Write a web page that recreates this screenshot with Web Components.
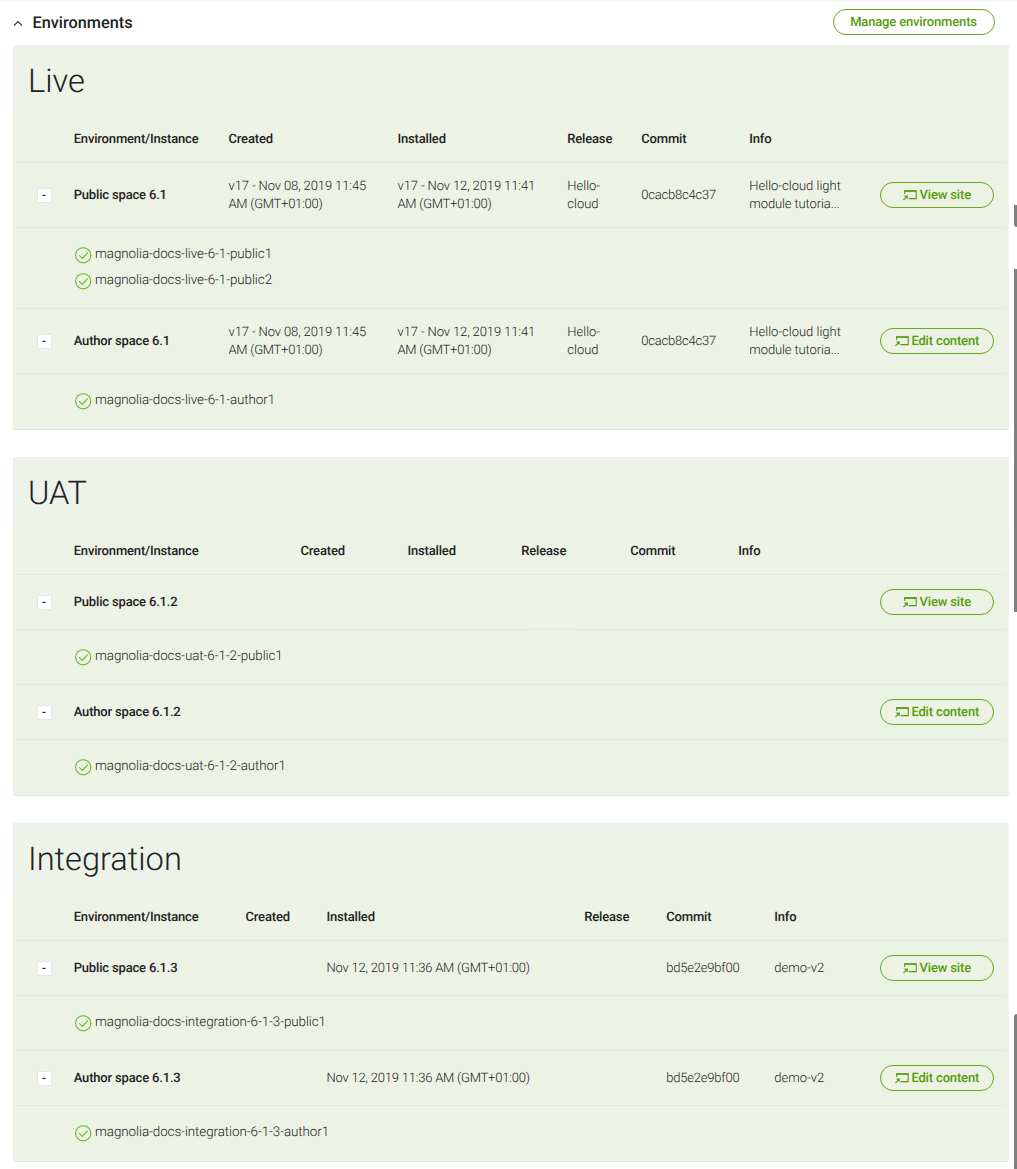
<!DOCTYPE html>
<html lang="en">
<head>
<meta charset="utf-8">
<title>Environments</title>
<style>
html,body{margin:0;height:1169px;overflow:hidden;background:#fff}
body{font-family:Roboto,"Liberation Sans",sans-serif;font-size:13px;color:#333;text-rendering:geometricPrecision}
</style>
</head>
<body>
<env-page></env-page>
<script>
const define = (name, render) => customElements.define(name, class extends HTMLElement {
  connectedCallback() {
    if (this.shadowRoot) return;
    this.attachShadow({mode: 'open'}).innerHTML = render(this);
  }
});

define('pill-button', el => `
<style>
:host{display:flex;box-sizing:border-box;height:26px;margin-bottom:1px;border:1.3px solid #67a91b;border-radius:13px;align-items:center;justify-content:center;color:#559c0b;font-weight:500;font-size:13px;line-height:18px;white-space:nowrap;letter-spacing:-.16px}
svg{display:block;width:14px;height:12px;margin-right:2.5px;flex:none}
span{padding-top:2px}
</style>
${el.hasAttribute('cast') ? `<svg viewBox="0 0 14 12" fill="none" stroke="#559c0b"><path d="M1.7 5V2H13.2V9.6H5.6" stroke-width="1.1"/><path d="M1.2 2H13.7" stroke-width="1.7"/><path d="M.5 10.8 4 7.3M1.5 7.1H4.2V9.8" stroke-width="1.2"/></svg>` : ''}
<span><slot></slot></span>`);

define('status-item', () => `
<style>
:host{display:flex;height:26px;align-items:flex-start;font-weight:300;font-size:13.4px;line-height:18px;white-space:nowrap;color:#1c1c1c;letter-spacing:-.07px}
svg{width:17px;height:17px;margin:1.5px 3px 0 1px;flex:none}
span{padding-top:1px}
</style>
<svg viewBox="0 0 17 17" fill="none" stroke="#70b62c" stroke-width="1.15"><circle cx="8.2" cy="8.3" r="7.6"/><path d="M4.1 8.2 7.3 11.4 12.7 5.7"/></svg>
<span><slot></slot></span>`);

define('toggle-box', () => `
<style>
:host{display:block;box-sizing:border-box;width:15px;height:15px;margin-left:23.5px;background:#fff;border:1px solid #e5e8e6;border-radius:1px;text-align:center;color:#222;font-size:12px;font-weight:500;line-height:13px}
</style>-`);

const tightness = text =>
  text.startsWith('AM (') ? 'zone' :
  text.startsWith('v17') ? 'stamp' :
  text.startsWith('Nov') || /^[0-9a-f]{11}$/.test(text) ? 'tight' :
  text.startsWith('module') ? 'stamp' : '';

define('env-row', el => {
  const cells = el.getAttribute('cells').split('|');
  const head = el.hasAttribute('head');
  const action = el.getAttribute('action');
  return `
<style>
:host{display:grid;grid-template-columns:var(--cols);box-sizing:border-box;align-items:center;border-bottom:1px solid #e5e8e6;margin-right:2px;line-height:18px;height:var(--row-height,55px)}
:host([head]){height:46px}
:host([accent]){background:linear-gradient(#f0eccb,#f0eccb) 517px 100%/46px 1px no-repeat}
div{white-space:pre;font-weight:300;color:#1c1c1c;padding-top:1px}
:host([head]) div{padding-top:0}
span{display:block}
.stamp{letter-spacing:-.11px}
.tight{letter-spacing:-.21px}
.zone{letter-spacing:-.26px}
div.strong{font-weight:500;color:#222;letter-spacing:-.17px}
</style>
${head ? '<i></i>' : '<toggle-box></toggle-box>'}
${cells.map((c, i) => `<div class="${head || i === 0 ? 'strong' : ''}">${c.split('/n').map(t => `<span class="${tightness(t)}">${t}</span>`).join('')}</div>`).join('')}
${action ? `<pill-button cast>${action}</pill-button>` : ''}`;
});

define('instance-list', () => `
<style>
:host{display:flex;flex-direction:column;box-sizing:border-box;padding:17px 0 11px 61px;border-bottom:1px solid #e5e8e6;margin-right:2px}
:host(:last-child){margin-right:0;padding-bottom:12px;border-bottom-color:#e1e5dd}
</style><slot></slot>`);

define('env-panel', el => `
<style>
:host{display:block;background:#ecf2e4;border-radius:2px;overflow:hidden;margin-bottom:27px}
h2{margin:0;height:72px;box-sizing:border-box;padding:14px 15px 0;background:#edf3e9;font-weight:300;font-size:32.6px;line-height:44px;color:#222}
</style>
<h2>${el.getAttribute('name')}</h2><slot></slot>`);

define('env-page', () => {
  const heads = 'Environment/Instance|Created|Installed|Release|Commit|Info';
  const live = 'v17 - Nov 08, 2019 11:45/nAM (GMT+01:00)|v17 - Nov 12, 2019 11:41/nAM (GMT+01:00)|Hello-/ncloud|0cacb8c4c37|Hello-cloud light/nmodule tutoria...';
  const integ = '|Nov 12, 2019 11:36 AM (GMT+01:00)||bd5e2e9bf00|demo-v2';
  const panels = [
    ['Live', 'live', [['Public space 6.1', live, 'View site', ['magnolia-docs-live-6-1-public1', 'magnolia-docs-live-6-1-public2']], ['Author space 6.1', live, 'Edit content', ['magnolia-docs-live-6-1-author1']]]],
    ['UAT', 'uat', [['Public space 6.1.2', '||||', 'View site', ['magnolia-docs-uat-6-1-2-public1']], ['Author space 6.1.2', '||||', 'Edit content', ['magnolia-docs-uat-6-1-2-author1']]]],
    ['Integration', 'integration', [['Public space 6.1.3', integ, 'View site', ['magnolia-docs-integration-6-1-3-public1']], ['Author space 6.1.3', integ, 'Edit content', ['magnolia-docs-integration-6-1-3-author1']]]]
  ];
  return `
<style>
:host{display:flex;height:1169px;box-sizing:border-box;border-top:1px solid #f3f3f3}
main{width:995.5px;padding-left:13px;flex:none}
header{display:flex;align-items:center;height:44px}
header svg{width:10px;height:7px;margin-right:9.5px}
h1{margin:0;flex:1;font-size:16.3px;font-weight:500;line-height:20px;color:#222}
header pill-button{width:162px;margin-right:14px;margin-bottom:2px}
.live{--cols:60.7px 154.8px 169px 169.8px 74px 108px 131px 113.5px;--row-height:65px}
.uat{--cols:60.7px 226.8px 107px 113.8px 109px 108px 142px 113.5px}
.integration{--cols:60.7px 171.8px 81px 257.8px 82px 108px 106px 113.5px}
aside{width:3px;margin-left:auto;display:flex;flex-direction:column;padding-top:204px}
aside i{background:#808080;border-radius:0 0 0 3px;flex:none}
aside i+i{border-radius:0}
aside i:last-child{border-radius:3px 0 0 0}
</style>
<main>
<header><svg viewBox="0 0 10 7" fill="none" stroke="#333" stroke-width="1.1"><path d="M1 5.5 5 1.5 9 5.5"/></svg><h1>Environments</h1><pill-button>Manage environments</pill-button></header>
${panels.map(([name, cls, rows]) => `<env-panel class="${cls}" name="${name}"><env-row head cells="${heads}"></env-row>${rows.map(([label, data, action, list], i) => `<env-row ${cls === 'uat' && i === 0 ? 'accent' : ''} cells="${label}|${data}" action="${action}"></env-row><instance-list>${list.map(t => `<status-item>${t}</status-item>`).join('')}</instance-list>`).join('')}</env-panel>`).join('')}
</main>
<aside><i style="height:22px"></i><i style="height:343px;margin-top:42px"></i><i style="height:155px;margin-top:402px"></i></aside>`;
});
</script>
</body>
</html>
